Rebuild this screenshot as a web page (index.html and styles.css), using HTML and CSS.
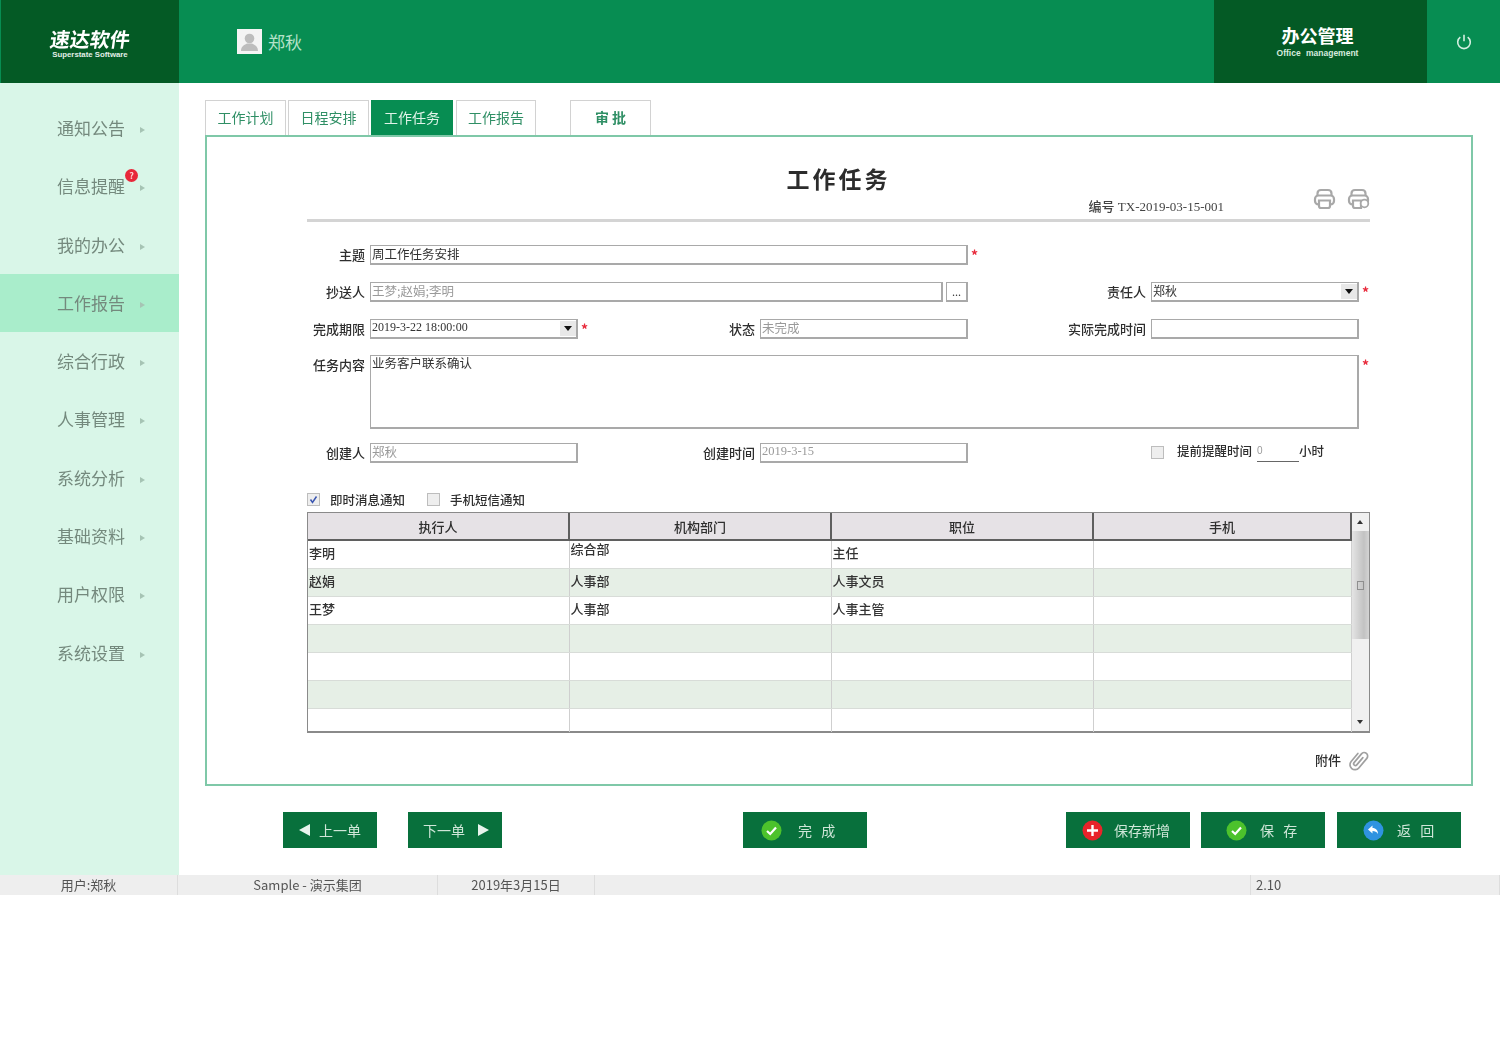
FILE: index.html
```html
<!DOCTYPE html>
<html>
<head>
    <title>工作任务</title>
    <meta charset="utf-8">
    <link rel="stylesheet" href="styles.css">
</head>
<body>
<div class="app">
    <div class="header">
        <div class="logo">
            <div class="logo-name">速达软件</div>
            <div class="logo-sub">Superstate Software</div>
        </div>
        <div class="user">
            <svg class="avatar" width="25" height="25" viewBox="0 0 25 25">
                <rect width="25" height="25" fill="#f4f4f4"/>
                <circle cx="12.5" cy="9.5" r="4.8" fill="#bdbdbd"/>
                <path d="M4 22c0-5 4-6.5 6-7.5h5c2 1 6 2.500 6 7.500z" fill="#bdbdbd"/>
            </svg>
            <span class="user-name">郑秋</span>
        </div>
        <div class="module">
            <div class="module-name">办公管理</div>
            <div class="module-sub">Office management</div>
        </div>
        <div class="power">
            <svg width="18" height="18" viewBox="0 0 18 18" fill="none" stroke="#d5efe1" stroke-width="1.600">
                <path d="M5.300 4.200a6.300 6.300 0 1 0 7.400 0"/>
                <path d="M9 1.800v6.400"/>
            </svg>
        </div>
    </div>

    <div class="middle">
        <div class="sidebar">
            <div class="side-item">通知公告<i class="arrow"></i></div>
            <div class="side-item">信息提醒<b class="badge">?</b><i class="arrow"></i></div>
            <div class="side-item">我的办公<i class="arrow"></i></div>
            <div class="side-item active">工作报告<i class="arrow"></i></div>
            <div class="side-item">综合行政<i class="arrow"></i></div>
            <div class="side-item">人事管理<i class="arrow"></i></div>
            <div class="side-item">系统分析<i class="arrow"></i></div>
            <div class="side-item">基础资料<i class="arrow"></i></div>
            <div class="side-item">用户权限<i class="arrow"></i></div>
            <div class="side-item">系统设置<i class="arrow"></i></div>
        </div>

        <div class="main">
            <div class="tabs">
                <div class="tab">工作计划</div>
                <div class="tab">日程安排</div>
                <div class="tab current">工作任务</div>
                <div class="tab report">工作报告</div>
                <div class="tab approve">审 批</div>
            </div>

            <div class="panel">
                <div class="doc-head">
                    <h1 class="doc-title">工作任务</h1>
                    <div class="doc-meta">
                        <span class="doc-no"><b>编号</b> TX-2019-03-15-001</span>
                        <svg width="23" height="22" viewBox="0 0 23 22" fill="none" stroke="#a8a8a8" stroke-width="2.200">
                            <path d="M4.500 8V5.500Q4.500 2 8 2h7q3.500 0 3.500 3.500V8"/>
                            <rect x="2" y="7.500" width="19" height="9" rx="3.500"/>
                            <path d="M6 12.500h11V18q0 2-2 2H8q-2 0-2-2z" fill="#fff"/>
                        </svg>
                        <svg width="23" height="22" viewBox="0 0 23 22" fill="none" stroke="#a8a8a8" stroke-width="2.200">
                            <path d="M4.500 8V5.500Q4.500 2 8 2h7q3.500 0 3.500 3.500V8"/>
                            <rect x="2" y="7.500" width="19" height="9" rx="3.500"/>
                            <path d="M6 12.500h8V20H8q-2 0-2-2z" fill="#fff"/>
                            <circle cx="17.500" cy="15.500" r="3.800" fill="#fff" stroke-width="1.800"/>
                        </svg>
                    </div>
                </div>

                <div class="form">
                    <label class="lbl">主题</label>
                    <input class="field span3" type="text" value="周工作任务安排">
                    <span class="star">*</span>
                    <span></span>
                    <span></span>

                    <label class="lbl">抄送人</label>
                    <div class="span3 with-btn">
                        <input class="field gray" type="text" value="王梦;赵娟;李明">
                        <span class="dots">...</span>
                    </div>
                    <label class="lbl">责任人</label>
                    <div class="select"><span>郑秋</span><i class="drop"></i></div>
                    <span class="star">*</span>

                    <label class="lbl">完成期限</label>
                    <div class="select serif"><span>2019-3-22 18:00:00</span><i class="drop"></i></div>
                    <label class="lbl lbl-star"><span class="star">*</span>状态</label>
                    <input class="field gray" type="text" value="未完成">
                    <label class="lbl">实际完成时间</label>
                    <input class="field" type="text">
                    <span></span>

                    <label class="lbl">任务内容</label>
                    <textarea class="field memo">业务客户联系确认</textarea>
                    <span class="star">*</span>

                    <label class="lbl">创建人</label>
                    <input class="field gray" type="text" value="郑秋">
                    <label class="lbl">创建时间</label>
                    <input class="field gray serif" type="text" value="2019-3-15">
                    <span></span>
                    <div class="remind">
                        <i class="box"></i>
                        <span class="remind-text">提前提醒时间</span>
                        <span class="hours">0</span>
                        <span class="unit">小时</span>
                    </div>
                    <span></span>
                </div>

                <div class="notify">
                    <i class="box"><svg width="13" height="13" viewBox="0 0 13 13" fill="none" stroke="#3a55b0" stroke-width="1.500"><path d="M3.500 6.500l2 3 4-6"/></svg></i>
                    <span class="notify-text">即时消息通知</span>
                    <i class="box"></i>
                    <span>手机短信通知</span>
                </div>

                <div class="grid-wrap">
                    <table class="grid">
                        <thead>
                            <tr><th class="c1">执行人</th><th class="c2">机构部门</th><th class="c3">职位</th><th>手机</th></tr>
                        </thead>
                        <tbody>
                            <tr><td>李明</td><td class="raised">综合部</td><td>主任</td><td></td></tr>
                            <tr><td>赵娟</td><td>人事部</td><td>人事文员</td><td></td></tr>
                            <tr><td>王梦</td><td>人事部</td><td>人事主管</td><td></td></tr>
                            <tr><td></td><td></td><td></td><td></td></tr>
                            <tr><td></td><td></td><td></td><td></td></tr>
                            <tr><td></td><td></td><td></td><td></td></tr>
                            <tr class="last"><td></td><td></td><td></td><td></td></tr>
                        </tbody>
                    </table>
                    <div class="scroll">
                        <i class="up"></i>
                        <div class="thumb"><span></span></div>
                        <i class="down"></i>
                    </div>
                </div>

                <div class="attach">
                    <span>附件</span>
                    <svg width="23" height="23" viewBox="0 0 23 23" fill="none" stroke="#a0a0a0" stroke-width="1.700" stroke-linecap="round">
                        <g transform="rotate(40 11.500 11.500)">
                            <path d="M6.500 6.500V17a5 5 0 0 0 10 0V4.500a3.500 3.500 0 0 0-7 0V16a1.700 1.700 0 0 0 3.500 0V6.500"/>
                        </g>
                    </svg>
                </div>
            </div>

            <div class="actions">
                <div class="btn btn-prev"><i class="tri-left"></i><span>上一单</span></div>
                <div class="btn btn-next"><span>下一单</span><i class="tri-right"></i></div>
                <div class="btn btn-done">
                    <svg class="ico" width="21" height="21" viewBox="0 0 21 21"><circle cx="10.500" cy="10.500" r="10" fill="#4cc22c"/><path d="M6 11l3.200 3L15 7.500" fill="none" stroke="#fff" stroke-width="2.200"/></svg>
                    <span>完 成</span>
                </div>
                <div class="btn btn-new">
                    <svg class="ico" width="21" height="21" viewBox="0 0 21 21"><circle cx="10.500" cy="10.500" r="10" fill="#e8232a"/><path d="M10.500 5v11M5 10.500h11" stroke="#fff" stroke-width="2.400"/></svg>
                    <span>保存新增</span>
                </div>
                <div class="btn btn-save">
                    <svg class="ico" width="21" height="21" viewBox="0 0 21 21"><circle cx="10.500" cy="10.500" r="10" fill="#4cc22c"/><path d="M6 11l3.200 3L15 7.500" fill="none" stroke="#fff" stroke-width="2.200"/></svg>
                    <span>保 存</span>
                </div>
                <div class="btn btn-back">
                    <svg class="ico" width="21" height="21" viewBox="0 0 21 21"><circle cx="10.500" cy="10.500" r="10" fill="#2f93e0"/><path d="M9.500 5.500 5 9.500l4.500 4v-2.500c2.500 0 4 .8 5.500 3 0-3.500-2-6-5.500-6z" fill="#fff"/></svg>
                    <span>返 回</span>
                </div>
            </div>
        </div>
    </div>

    <div class="status">
        <div class="st-user">用户:郑秋</div>
        <div class="st-org">Sample - 演示集团</div>
        <div class="st-date">2019年3月15日</div>
        <div class="st-fill"></div>
        <div class="st-ver">2.10</div>
    </div>
</div>
</body>
</html>
```

FILE: styles.css
```css
body{
    margin: 0;
    background-color: white;
    font-family: "Noto Sans CJK SC", "Liberation Sans", sans-serif;
    font-size: 13px;
    color: #2e2e2e;
}
.app{
    width: 1500px;
    filter: blur(0.6px);
}

/* top bar */
.header{
    height: 83px;
    display: flex;
    align-items: stretch;
    background-color: #078d52;
    color: white;
}
.logo{
    width: 178px;
    margin-left: 1px;
    background-color: #045a25;
    text-align: center;
    box-sizing: border-box;
    padding-top: 26px;
}
.logo-name{
    font-size: 20px;
    font-weight: 700;
    line-height: 26px;
    letter-spacing: 0;
    transform: skewX(-8deg);
}
.logo-sub{
    font-family: "Liberation Sans", sans-serif;
    font-size: 7.800px;
    font-weight: 700;
    line-height: 6px;
    color: #e2efe7;
}
.user{
    display: flex;
    align-items: center;
    margin-left: 58px;
    width: 977px;
    margin-top: -1px;
}
.user-name{
    font-size: 17px;
    margin-left: 6px;
    color: #b4e2c9;
}
.module{
    width: 213px;
    background-color: #045a25;
    text-align: center;
    padding: 22px 6px 0 0;
    box-sizing: border-box;
}
.module-name{
    font-size: 18px;
    font-weight: 700;
    line-height: 26px;
}
.module-sub{
    font-family: "Liberation Sans", sans-serif;
    font-size: 8.500px;
    font-weight: 700;
    line-height: 10px;
    word-spacing: 3px;
    color: #d7ebdf;
}
.power{
    flex: 1;
    display: flex;
    align-items: center;
    justify-content: center;
}

/* left menu */
.middle{
    display: flex;
    height: 792px;
}
.sidebar{
    width: 179px;
    flex-shrink: 0;
    background-color: #d9f6e8;
    padding-top: 16px;
    box-sizing: border-box;
}
.side-item{
    position: relative;
    height: 58.300px;
    line-height: 58px;
    padding-left: 57px;
    font-size: 17px;
    color: #74897d;
}
.side-item.active{
    background-color: #a9edcb;
}
.arrow{
    display: inline-block;
    margin-left: 15px;
    vertical-align: 2px;
    border-left: 5px solid #a6c4b4;
    border-top: 3px solid transparent;
    border-bottom: 3px solid transparent;
}
.badge{
    position: absolute;
    left: 125px;
    top: 12px;
    width: 13px;
    height: 13px;
    border-radius: 50%;
    background-color: #e8283a;
    color: #ffd0d0;
    font-size: 9px;
    line-height: 13px;
    text-align: center;
}

/* tabs and panel */
.main{
    flex: 1;
    padding: 17px 0 0 26px;
}
.tabs{
    display: flex;
    height: 35px;
}
.tab{
    width: 81px;
    margin-right: 2px;
    border: 1px solid #d2d2d2;
    border-bottom: none;
    box-sizing: border-box;
    text-align: center;
    line-height: 33px;
    font-size: 14px;
    color: #2f8f65;
}
.tab.current{
    width: 82px;
    margin-right: 3px;
    background-color: #078d52;
    border-color: #078d52;
    color: #dff3e8;
}
.tab.report{
    width: 80px;
}
.tab.approve{
    margin-left: 32px;
    font-weight: 700;
}
.panel{
    width: 1268px;
    height: 651px;
    box-sizing: border-box;
    border: 2px solid #7fc8a8;
    padding: 0 101px 0 100px;
}
.doc-head{
    border-bottom: 3px solid #d4d4d4;
    padding-bottom: 9px;
}
.doc-title{
    margin: 0;
    padding-top: 26px;
    text-align: center;
    font-size: 23px;
    line-height: 30px;
    font-weight: 700;
    letter-spacing: 3px;
    color: #2c2c2c;
}
.doc-meta{
    display: flex;
    justify-content: flex-end;
    align-items: flex-end;
    height: 21px;
    margin-top: -4px;
}
.doc-meta svg{
    margin-left: 11px;
}
.doc-no{
    font-family: "Liberation Serif", "Noto Sans CJK SC", serif;
    font-size: 13px;
    margin-right: 78px;
    line-height: 14px;
    margin-bottom: -4px;
    color: #444;
}
.doc-no b{
    font-family: "Noto Sans CJK SC", sans-serif;
    font-weight: 500;
    font-size: 13px;
}

/* form */
.form{
    display: grid;
    grid-template-columns: 63px 208px 182px 208px 183px 208px 11px;
    grid-template-rows: 37px 37px 36px 88px 49px;
    align-items: start;
    margin-top: 23px;
}
.lbl{
    text-align: right;
    padding-right: 5px;
    line-height: 20px;
    white-space: nowrap;
    font-size: 13px;
    font-weight: 500;
}
.lbl-star{
    display: flex;
    justify-content: space-between;
}
.span3{
    grid-column: span 3;
}
.field{
    box-sizing: border-box;
    height: 20px;
    width: 100%;
    margin: 0;
    padding: 0 1px 3px;
    border: 2px solid #a9a9a9;
    border-width: 1px 2px 2px 1px;
    background-color: white;
    font-family: "Noto Sans CJK SC", sans-serif;
    font-size: 12.500px;
    color: #333;
    outline: none;
}
.gray{
    color: #9a9a9a;
}
.serif,
.serif span{
    font-family: "Liberation Serif", serif;
}
.memo{
    grid-column: 2 / span 5;
    height: 74px;
    resize: none;
    line-height: 14px;
}
.star{
    color: #e8283a;
    font-weight: 700;
    font-size: 14px;
    line-height: 20px;
    padding-left: 3px;
}
.with-btn{
    display: flex;
    gap: 3px;
}
.with-btn .field{
    flex: 1;
}
.dots{
    width: 22px;
    height: 20px;
    box-sizing: border-box;
    border: 2px solid #a9a9a9;
    border-width: 1px 2px 2px 1px;
    text-align: center;
    line-height: 17px;
    font-size: 11px;
}
.select{
    box-sizing: border-box;
    height: 20px;
    display: flex;
    justify-content: space-between;
    border: 2px solid #a9a9a9;
    border-width: 1px 2px 2px 1px;
    padding-left: 1px;
    font-size: 12px;
    line-height: 15px;
    color: #333;
}
.drop{
    width: 16px;
    height: 15px;
    margin-top: 1px;
    background-color: #e8e8e8;
    position: relative;
}
.drop::after{
    content: "";
    position: absolute;
    left: 4px;
    top: 5px;
    border-top: 5px solid #111;
    border-left: 4px solid transparent;
    border-right: 4px solid transparent;
}
.remind{
    display: flex;
    align-items: flex-start;
    font-size: 12.500px;
    line-height: 16px;
    white-space: nowrap;
}
.remind .box{
    margin-top: 3px;
}
.remind-text{
    margin-left: 13px;
    font-weight: 500;
}
.hours{
    width: 42px;
    height: 19px;
    margin-left: 5px;
    border-bottom: 1px solid #666;
    box-sizing: border-box;
    color: #9a9a9a;
    font-family: "Liberation Sans", sans-serif;
    font-size: 10px;
}
.unit{
    font-weight: 500;
}
.box{
    display: inline-block;
    width: 13px;
    height: 13px;
    flex-shrink: 0;
    box-sizing: border-box;
    background-color: #eeeeee;
    border: 1px solid #bdbdbd;
}
.box svg{
    display: block;
    margin: -1px;
}
.notify{
    display: flex;
    align-items: center;
    height: 15px;
    font-size: 12.500px;
    font-weight: 500;
}
.notify span{
    margin-left: 10px;
}
.notify .notify-text{
    margin-right: 22px;
}

/* grid */
.grid-wrap{
    display: flex;
    height: 221px;
    margin-top: 5px;
    box-sizing: border-box;
    border: 1px solid #8a8a8a;
    border-bottom: 2px solid #8a8a8a;
}
.grid{
    width: 1044px;
    table-layout: fixed;
    border-collapse: collapse;
    font-size: 13px;
}
.c1{
    width: 261px;
}
.c2,
.c3{
    width: 262px;
}
.grid th{
    height: 27px;
    padding: 0;
    box-sizing: border-box;
    background-color: #e6e2e6;
    border-right: 2px solid #5f5f5f;
    border-bottom: 2px solid #5f5f5f;
    font-weight: 500;
}
.grid td{
    height: 28px;
    padding: 0 1px 3px;
    box-sizing: border-box;
    border-right: 1px solid #cfcfcf;
    border-bottom: 1px solid #d8dcd8;
    font-weight: 500;
    color: #333;
}
.grid tbody tr:nth-child(even) td{
    background-color: #e6efe6;
}
.grid tr.last td{
    height: 24px;
    border-bottom: none;
}
.grid td.raised{
    vertical-align: top;
    line-height: 15px;
}
.scroll{
    flex: 1;
    display: flex;
    flex-direction: column;
    background-color: #f0f0f0;
}
.up,
.down{
    height: 18px;
    position: relative;
}
.up::after,
.down::after{
    content: "";
    position: absolute;
    left: 5px;
    top: 7px;
    border-left: 3px solid transparent;
    border-right: 3px solid transparent;
}
.up::after{
    border-bottom: 4px solid #333;
}
.down::after{
    border-top: 4px solid #333;
}
.thumb{
    height: 108px;
    background: linear-gradient(to right, #e4e4e4, #c2c2c2 70%, #d4d4d4);
    margin-bottom: auto;
    display: flex;
    align-items: center;
    justify-content: center;
}
.thumb span{
    width: 5px;
    height: 7px;
    border: 1px solid #8f8f8f;
}
.attach{
    display: flex;
    justify-content: flex-end;
    align-items: center;
    gap: 6px;
    margin-top: 16px;
    height: 23px;
    font-size: 13px;
    font-weight: 500;
}
.attach span{
    margin-bottom: 3px;
}

/* bottom buttons */
.actions{
    display: flex;
    margin-top: 26px;
}
.btn{
    display: flex;
    align-items: center;
    height: 36px;
    width: 124px;
    box-sizing: border-box;
    background-color: #08703c;
    color: #cfe6d8;
    font-size: 14px;
    word-spacing: 6px;
    white-space: nowrap;
}
.ico{
    flex-shrink: 0;
    margin-right: 13px;
}
.btn-prev{
    width: 94px;
    margin-left: 78px;
    padding-left: 16px;
}
.btn-next{
    width: 94px;
    margin-left: 31px;
    padding-left: 15px;
}
.btn-done{
    margin-left: 241px;
    padding-left: 18px;
}
.btn-done .ico{
    margin-right: 16px;
}
.btn-new{
    margin-left: 199px;
    padding-left: 16px;
}
.btn-new .ico{
    margin-right: 11px;
}
.btn-save{
    margin-left: 11px;
    padding-left: 25px;
}
.btn-back{
    margin-left: 12px;
    padding-left: 26px;
}
.tri-left,
.tri-right{
    border-top: 6px solid transparent;
    border-bottom: 6px solid transparent;
}
.tri-left{
    border-right: 11px solid #e8f4ed;
    margin-right: 9px;
}
.tri-right{
    border-left: 11px solid #e8f4ed;
    margin-left: 13px;
}

/* status bar */
.status{
    display: flex;
    height: 20px;
    background-color: #eeeeee;
    line-height: 20px;
    font-size: 13px;
    color: #555;
    text-align: center;
}
.status div{
    box-sizing: border-box;
    border-right: 1px solid #dddddd;
}
.st-user{
    width: 178px;
}
.st-org{
    width: 260px;
}
.st-date{
    width: 157px;
}
.st-fill{
    width: 656px;
}
.st-ver{
    flex: 1;
    text-align: left;
    padding-left: 5px;
}
```
